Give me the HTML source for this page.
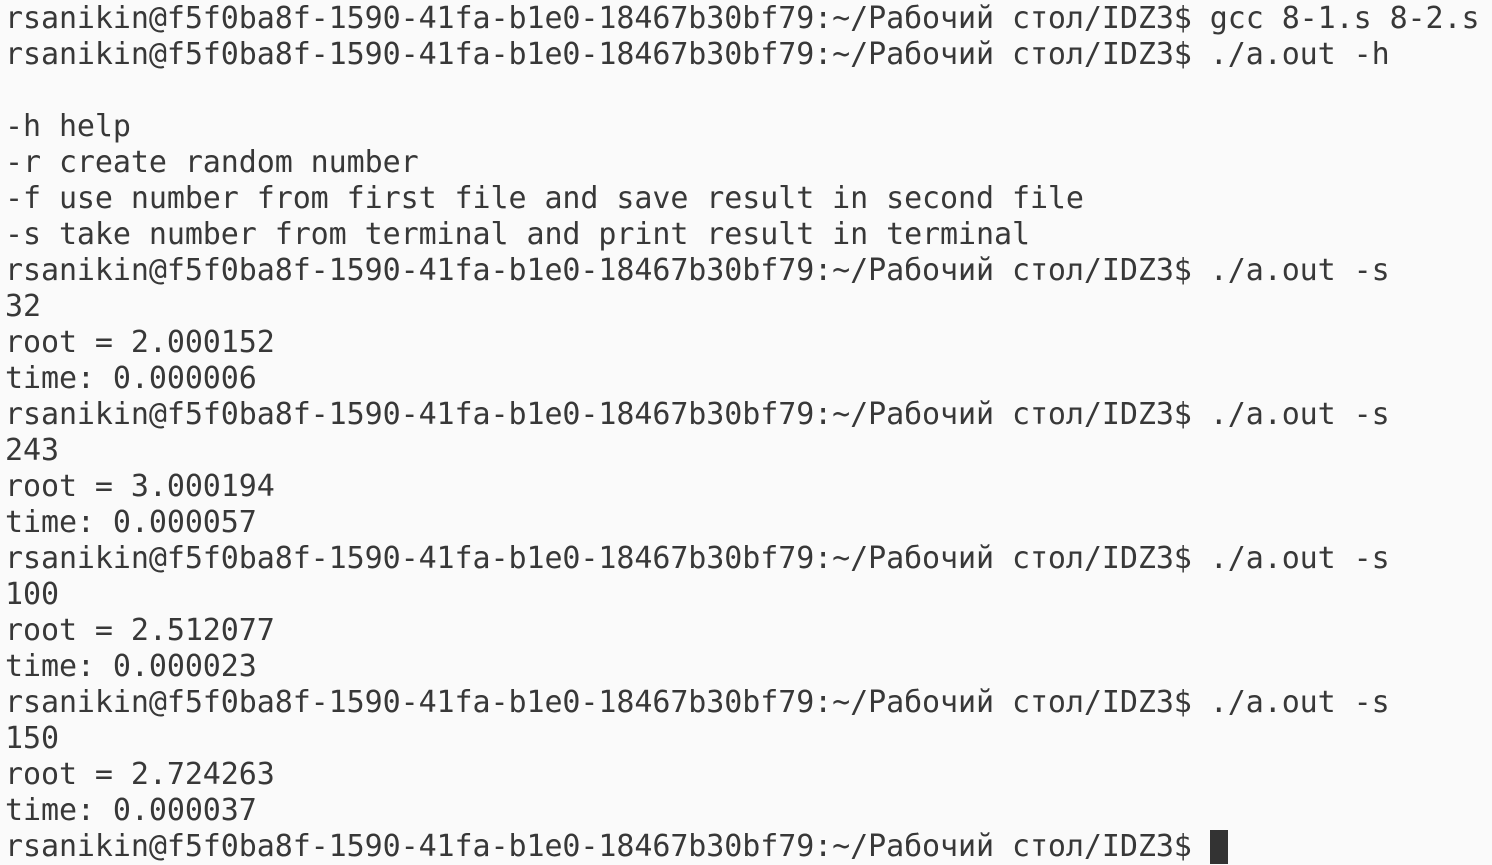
<!DOCTYPE html>
<html><head><meta charset="utf-8"><style>
html,body{margin:0;padding:0;background:#fafafa;width:1492px;height:862px;overflow:hidden}
pre{margin:0;position:absolute;left:5px;top:1px;font-family:"DejaVu Sans Mono","Liberation Mono",monospace;font-size:30px;letter-spacing:-0.08px;line-height:36px;color:#383838;white-space:pre}
.c{display:inline-block;width:18px;height:34px;background:#333;vertical-align:-8px}
</style></head><body><pre>rsanikin@f5f0ba8f-1590-41fa-b1e0-18467b30bf79:~/Рабочий стол/IDZ3$ gcc 8-1.s 8-2.s
rsanikin@f5f0ba8f-1590-41fa-b1e0-18467b30bf79:~/Рабочий стол/IDZ3$ ./a.out -h

-h help
-r create random number
-f use number from first file and save result in second file
-s take number from terminal and print result in terminal
rsanikin@f5f0ba8f-1590-41fa-b1e0-18467b30bf79:~/Рабочий стол/IDZ3$ ./a.out -s
32
root = 2.000152
time: 0.000006
rsanikin@f5f0ba8f-1590-41fa-b1e0-18467b30bf79:~/Рабочий стол/IDZ3$ ./a.out -s
243
root = 3.000194
time: 0.000057
rsanikin@f5f0ba8f-1590-41fa-b1e0-18467b30bf79:~/Рабочий стол/IDZ3$ ./a.out -s
100
root = 2.512077
time: 0.000023
rsanikin@f5f0ba8f-1590-41fa-b1e0-18467b30bf79:~/Рабочий стол/IDZ3$ ./a.out -s
150
root = 2.724263
time: 0.000037
rsanikin@f5f0ba8f-1590-41fa-b1e0-18467b30bf79:~/Рабочий стол/IDZ3$ <span class="c"></span></pre></body></html>
